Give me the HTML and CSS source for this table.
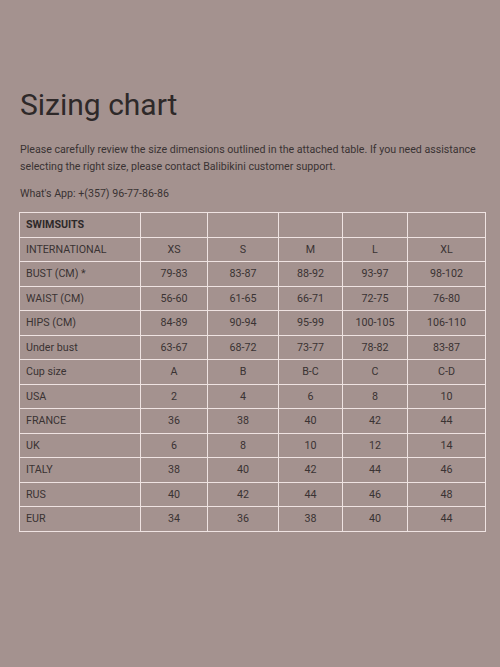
FILE: index.html
```html
<!DOCTYPE html>
<html>
<head>
<meta charset="utf-8">
<link rel="stylesheet" href="styles.css">
</head>
<body>
<div class="page">
  <h1 class="title">Sizing chart</h1>
  <p class="intro">Please carefully review the size dimensions outlined in the attached table. If you need assistance selecting the right size, please contact Balibikini customer support.</p>
  <p class="contact">What's App: +(357) 96-77-86-86</p>
  <table class="chart">
    <colgroup>
      <col class="c0"><col class="c1"><col class="c2"><col class="c3"><col class="c4"><col class="c5">
    </colgroup>
    <tbody>
      <tr><th>SWIMSUITS</th><td></td><td></td><td></td><td></td><td></td></tr>
      <tr><th class="lbl">INTERNATIONAL</th><td>XS</td><td>S</td><td>M</td><td>L</td><td>XL</td></tr>
      <tr><th class="lbl">BUST (CM) *</th><td>79-83</td><td>83-87</td><td>88-92</td><td>93-97</td><td>98-102</td></tr>
      <tr><th class="lbl">WAIST (CM)</th><td>56-60</td><td>61-65</td><td>66-71</td><td>72-75</td><td>76-80</td></tr>
      <tr><th class="lbl">HIPS (CM)</th><td>84-89</td><td>90-94</td><td>95-99</td><td>100-105</td><td>106-110</td></tr>
      <tr><th class="lbl">Under bust</th><td>63-67</td><td>68-72</td><td>73-77</td><td>78-82</td><td>83-87</td></tr>
      <tr><th class="lbl">Cup size</th><td>A</td><td>B</td><td>B-C</td><td>C</td><td>C-D</td></tr>
      <tr><th class="lbl">USA</th><td>2</td><td>4</td><td>6</td><td>8</td><td>10</td></tr>
      <tr><th class="lbl">FRANCE</th><td>36</td><td>38</td><td>40</td><td>42</td><td>44</td></tr>
      <tr><th class="lbl">UK</th><td>6</td><td>8</td><td>10</td><td>12</td><td>14</td></tr>
      <tr><th class="lbl">ITALY</th><td>38</td><td>40</td><td>42</td><td>44</td><td>46</td></tr>
      <tr><th class="lbl">RUS</th><td>40</td><td>42</td><td>44</td><td>46</td><td>48</td></tr>
      <tr><th class="lbl">EUR</th><td>34</td><td>36</td><td>38</td><td>40</td><td>44</td></tr>
    </tbody>
  </table>
</div>
</body>
</html>
```
FILE: styles.css
```css
html, body {
  margin: 0;
  padding: 0;
  background: #a4928f;
  height: 100%;
}
body {
  font-family: Roboto, "Liberation Sans", sans-serif;
  color: #3a3333;
}
.page {
  padding: 87px 16px 0 19px;
}
.title {
  margin: 0 0 0 1px;
  font-size: 30px;
  font-weight: 400;
  line-height: 36px;
  color: #2e2929;
}
.intro {
  margin: 18px 0 0 1px;
  font-size: 10.65px;
  line-height: 17px;
}
.contact {
  margin: 10px 0 0 1px;
  font-size: 10.65px;
  line-height: 17px;
}
.chart {
  margin-top: 10px;
  border-collapse: collapse;
  table-layout: fixed;
  width: 466px;
  font-size: 10.7px;
}
.c0 { width: 121px; }
.c1 { width: 67px; }
.c2 { width: 71px; }
.c3 { width: 64px; }
.c4 { width: 65px; }
.c5 { width: 78px; }
.chart tr {
  height: 24.5px;
}
.chart th, .chart td {
  border: 1px solid #efe3e2;
  padding: 0 6px;
  box-sizing: border-box;
  text-align: center;
  vertical-align: middle;
}
.chart th {
  text-align: left;
  font-weight: 700;
  color: #2e2929;
}
.chart th.lbl {
  font-weight: 400;
  color: #3a3333;
}
```
